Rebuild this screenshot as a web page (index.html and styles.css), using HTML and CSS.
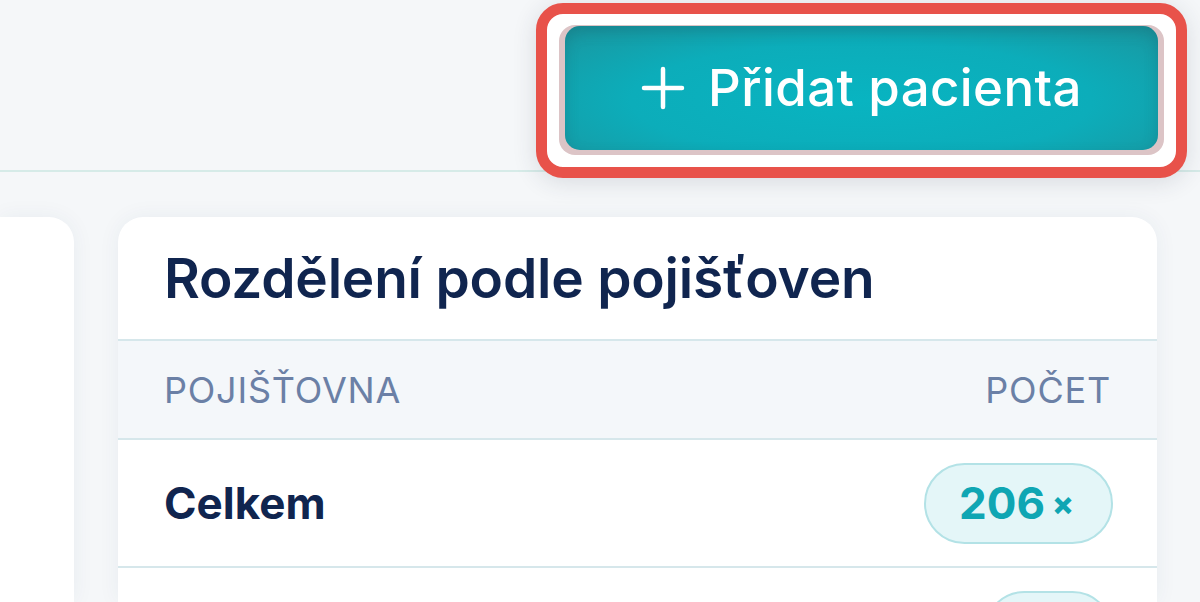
FILE: index.html
```html
<!DOCTYPE html>
<html lang="cs">
<head>
<meta charset="utf-8">
<title>Pacienti</title>
<link rel="stylesheet" href="styles.css">
</head>
<body>
<header class="topbar">
  <div class="highlight">
    <div class="btn-wrap">
      <button class="btn-add" type="button">
        <svg class="plus" viewBox="0 0 44 44" width="44" height="44" aria-hidden="true">
          <path d="M22 3v38M3 22h38" stroke="#fff" stroke-width="4.5" stroke-linecap="round" fill="none"/>
        </svg>
        <span>Přidat pacienta</span>
      </button>
    </div>
  </div>
</header>
<main class="content">
  <section class="card card-left"></section>
  <section class="card card-main">
    <h2 class="card-title">Rozdělení podle pojišťoven</h2>
    <div class="table">
      <div class="thead">
        <span>POJIŠŤOVNA</span>
        <span>POČET</span>
      </div>
      <div class="trow">
        <span class="name">Celkem</span>
        <span class="pill">206<small>×</small></span>
      </div>
      <div class="trow">
        <span class="name"></span>
        <span class="pill pill-empty"></span>
      </div>
    </div>
  </section>
</main>
</body>
</html>
```

FILE: styles.css
```css
* { box-sizing: border-box; }
html, body {
  margin: 0;
  padding: 0;
}
body {
  width: 1200px;
  height: 602px;
  overflow: hidden;
  background: #f5f7f9;
  font-family: Inter, "Noto Sans", sans-serif;
  color: #10254f;
}
.topbar {
  height: 172px;
  border-bottom: 2px solid #d6ebe8;
  display: flex;
  justify-content: flex-end;
  align-items: flex-start;
  padding: 3px 13px 0 0;
}
.highlight {
  border: 11px solid #e8524a;
  border-radius: 27px;
  background: #fff;
  padding: 11px 12px 12px 12px;
  box-shadow: 0 4px 24px rgba(40, 50, 70, 0.14);
}
.btn-wrap {
  background: #dcc4c6;
  border-radius: 16px;
  padding: 1px 6px 5px 6px;
}
.btn-add {
  width: 593px;
  height: 124px;
  border: 0;
  border-radius: 15px;
  display: flex;
  align-items: center;
  justify-content: center;
  gap: 23px;
  background: radial-gradient(ellipse at 50% 60%, #08b4c1 0%, #0cadba 55%, #1a959e 100%);
  box-shadow: inset 0 6px 14px rgba(20, 80, 90, 0.25);
  color: #fff;
  font-family: Inter, "Noto Sans", sans-serif;
  font-size: 51px;
  font-weight: 500;
  letter-spacing: 0.4px;
  padding: 0;
}
.btn-add span { line-height: 1; margin-top: -2px; }
.plus { display: block; }
.content {
  display: grid;
  grid-template-columns: 74px 1039px;
  column-gap: 44px;
  padding-top: 45px;
}
.card {
  background: #fff;
  height: 385px;
  overflow: hidden;
  box-shadow: 0 0 22px rgba(40, 60, 110, 0.06);
}
.card-left { border-radius: 0 25px 0 0; }
.card-main { border-radius: 25px 25px 0 0; }
.card-title {
  margin: 0;
  height: 124px;
  display: flex;
  align-items: center;
  padding: 0 46px;
  font-size: 55px;
  font-weight: 600;
  letter-spacing: -0.2px;
  color: #10254f;
  border-bottom: 2px solid #d6e7eb;
}
.thead {
  height: 99px;
  display: flex;
  justify-content: space-between;
  align-items: center;
  padding: 0 46px;
  background: #f4f7fa;
  border-bottom: 2px solid #d6e7eb;
  color: #6b80a6;
  font-size: 36px;
  font-weight: 400;
  letter-spacing: 0.8px;
}
.trow {
  height: 128px;
  display: flex;
  justify-content: space-between;
  align-items: center;
  padding: 0 44px 0 46px;
  border-bottom: 2px solid #d6e7eb;
}
.name {
  font-size: 44px;
  font-weight: 700;
  color: #10254f;
}
.pill {
  height: 81px;
  display: inline-flex;
  align-items: center;
  padding: 0 37px 0 33px;
  border: 2px solid #b3e2e6;
  border-radius: 41px;
  background: #e4f6f8;
  color: #0fa6b3;
  font-size: 44px;
  font-weight: 700;
}
.pill small {
  font-size: 32px;
  font-weight: 800;
  margin-left: 7px;
}
.pill-empty { width: 129px; }
```
